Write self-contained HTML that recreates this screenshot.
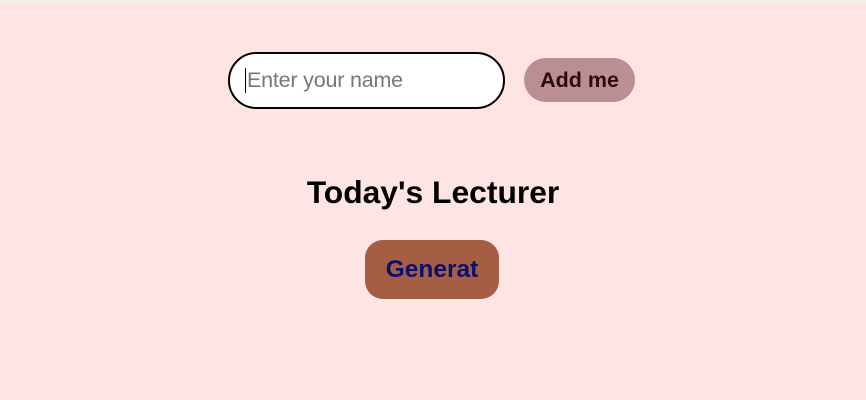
<!DOCTYPE html>
<html><head><style>
html,body{margin:0;padding:0}
body{width:866px;height:400px;background:#ffe4e4;position:relative;font-family:"Liberation Sans",sans-serif;overflow:hidden;border-top:2px solid #f0f0f0;box-sizing:border-box}
.inp{position:absolute;left:228px;top:50px;width:277px;height:57px;box-sizing:border-box;border:2px solid #000;border-radius:29px;background:#fff;}
.inp span{position:absolute;left:15px;top:14px;font-size:21.5px;color:#777;border-left:1px solid #000;padding-left:1px;line-height:25px;letter-spacing:-0.2px}
.add{position:absolute;left:524px;top:56px;width:111px;height:44px;border-radius:22px;background:#bb8e91;color:#2a0a0a;font-weight:bold;font-size:21.5px;text-align:center;line-height:44px}
h1{position:absolute;left:0;width:866px;top:170px;margin:0;text-align:center;font-size:31.8px;line-height:40px;font-weight:bold;color:#000}
.gen{position:absolute;left:365px;top:238px;width:134px;height:59px;border-radius:18px;background:#a55d43;color:#0a1070;font-weight:bold;font-size:24.5px;text-align:center;line-height:59px}
</style></head><body>
<div class="inp"><span>Enter your name</span></div>
<div class="add">Add me</div>
<h1>Today's Lecturer</h1>
<div class="gen">Generat</div>
</body></html>
